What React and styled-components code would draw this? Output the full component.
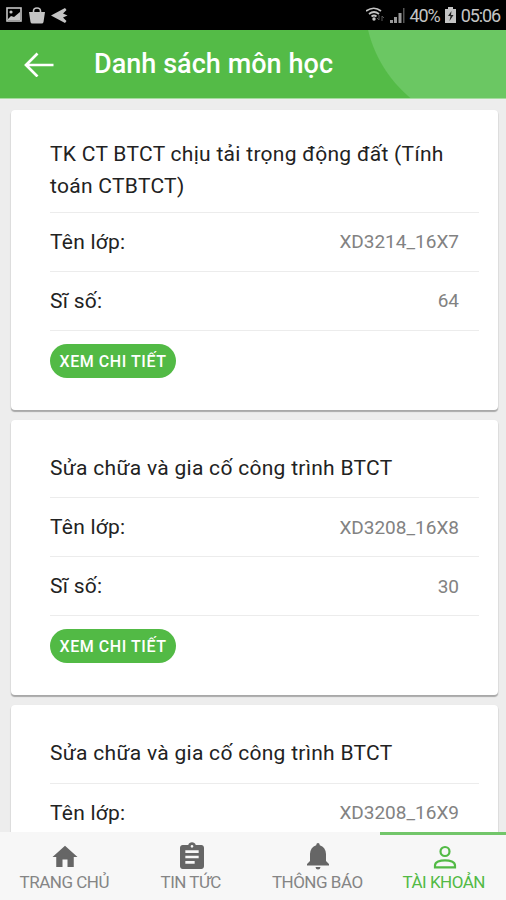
import styled, {createGlobalStyle} from "styled-components";
import {MdAssignment, MdHome} from "react-icons/md";

const GlobalStyle = createGlobalStyle`
  * {
    box-sizing: border-box;
  }

  body {
    margin: 0;
    font-family: Roboto, "Liberation Sans", sans-serif;
  }
`;

const Container = styled.div`
  height: 900px;
  width: 506px;
  display: flex;
  flex-direction: column;
  overflow: hidden;
  background-color: #ededed;
`;

const StatusBar = styled.div`
  height: 30px;
  flex: none;
  padding: 0 6px;
  display: flex;
  align-items: center;
  justify-content: space-between;
  background-color: #000;
  color: #c4c4c4;
`;

const StatusGroup = styled.div`
  display: flex;
  align-items: center;
  gap: ${props => props.$gap}px;
`;

const StatusText = styled.span`
  font-size: 18px;
  line-height: 30px;
  letter-spacing: -1.1px;
  padding-top: 2px;
`;

const Header = styled.header`
  height: 69px;
  flex: none;
  padding-left: 24px;
  display: flex;
  align-items: center;
  gap: 40px;
  background: radial-gradient(circle at 492px -30px, #6bc763 127px, #54bb47 128px);
  border-bottom: 1px solid #a5dc9f;
`;

const Title = styled.h1`
  margin: 0;
  color: white;
  font-size: 27px;
  font-weight: 500;
  letter-spacing: 0.05px;
`;

const List = styled.main`
  flex: 1;
  min-height: 0;
  overflow: hidden;
  padding: 10.5px 8px 0 11px;
`;

const Card = styled.section`
  margin-bottom: 10px;
  padding: 20px 19px 32px 39px;
  background-color: white;
  border-radius: 4px;
  box-shadow: 0 1px 1px 1px rgba(0, 0, 0, 0.05), 0 2px 1px rgba(0, 0, 0, 0.25);
`;

const Row = styled.div`
  min-height: 59px;
  padding: 9px 20px 9px 0;
  display: flex;
  align-items: center;
  justify-content: space-between;
  border-bottom: 1px solid #ececec;
`;

const NameRow = styled(Row)`
  min-height: 58.5px;
  padding-top: 8.5px;
  padding-bottom: 9.5px;
`;

const Name = styled.h2`
  margin: 0;
  color: #222;
  font-size: 21px;
  font-weight: 400;
  line-height: 32px;
  letter-spacing: 0.29px;
`;

const Label = styled.span`
  color: #222;
  font-size: 21px;
  letter-spacing: 0.25px;
`;

const Value = styled.span`
  color: #828282;
  font-size: 19px;
`;

const Button = styled.button`
  width: 126px;
  height: 34px;
  margin-top: 13px;
  padding: 1px 0 0;
  display: block;
  border: none;
  border-radius: 17px;
  background-color: #52ba45;
  color: white;
  font-family: inherit;
  font-size: 16px;
  font-weight: 500;
  letter-spacing: 0.55px;
  white-space: nowrap;
`;

const TabBar = styled.nav`
  height: 68px;
  flex: none;
  display: flex;
  background-color: #f7f7f7;
`;

const Tab = styled.a`
  flex: 1;
  padding: 5px 0 0 4px;
  display: flex;
  flex-direction: column;
  align-items: center;
  border-top: 3px solid ${props => props.$active ? "#72c66a" : "transparent"};
  color: ${props => props.$active ? "#52ba45" : "#666"};
`;

const TabIcon = styled.span`
  height: 33px;
  display: flex;
  align-items: center;
`;

const TabLabel = styled.span`
  margin: -1px 0 0 -2px;
  font-size: 17px;
  line-height: 20px;
  letter-spacing: -0.5px;
  white-space: nowrap;
  color: ${props => props.$active ? "#52ba45" : "#858585"};
`;

const PictureIcon = () => (
    <svg width="17" height="16" viewBox="0 0 17 16">
        <rect x="1" y="1" width="14" height="13" fill="none" stroke="currentColor" strokeWidth="1.6"/>
        <circle cx="5" cy="5" r="1.6" fill="currentColor"/>
        <path d="M2 12l3-3 3 1 6-5v8H2z" fill="currentColor"/>
    </svg>
);

const BagIcon = () => (
    <svg width="16" height="17" viewBox="0 0 16 17">
        <path d="M0 5h16l-1.500 10q-.2 1.500-2 1.500h-9q-1.800 0-2-1.500z" fill="currentColor"/>
        <path d="M4.500 7V4a3.500 3 0 0 1 7 0v3" fill="none" stroke="currentColor" strokeWidth="1.6"/>
    </svg>
);

const PlaneIcon = () => (
    <svg width="18" height="15" viewBox="0 0 18 15">
        <path d="M0 7.500L14 0l1.500 2-3.500 3.500 4.500 2-4.500 2 3.500 3.500-1.500 2z" fill="currentColor"/>
    </svg>
);

const WifiIcon = () => (
    <svg width="19" height="16" viewBox="0 0 19 16">
        <g fill="none" stroke="currentColor" strokeWidth="1.7">
            <path d="M0 4q8-5.500 15 0"/>
            <path d="M3 7q5-4 10 0"/>
            <path d="M5.500 9.500q2.500-2 5 0"/>
        </g>
        <circle cx="8" cy="12" r="1.700" fill="currentColor"/>
        <path d="M13 8v5l-2-2m5 3V9l2 2" fill="none" stroke="#555" strokeWidth="1"/>
    </svg>
);

const SignalIcon = () => (
    <svg width="15" height="15" viewBox="0 0 15 15">
        <path d="M0 12h3v3H0zM4 9h3v6H4zM8.500 5h3v10h-3z" fill="#999"/>
        <path d="M13 0h1.500v15H13z" fill="#555"/>
    </svg>
);

const BatteryIcon = () => (
    <svg width="11" height="16" viewBox="0 0 11 16">
        <path d="M3 0h5v2h3v14H0V2h3z" fill="currentColor"/>
        <path d="M6.500 4L3 9h2.500L4.500 14 8.500 8H6z" fill="#222"/>
    </svg>
);

const BackIcon = () => (
    <svg width="30" height="26" viewBox="0 0 30 26">
        <path d="M29.500 14H2M13.500 2.500L2 14l11.500 11.500" fill="none" stroke="white" strokeWidth="2.700"/>
    </svg>
);

const BellIcon = () => (
    <svg width="22" height="27" viewBox="0 0 22 27" fill="currentColor">
        <path d="M11 0q1.600 0 1.800 2.300Q18.500 4 19 11v7l3 3v1.500H0V21l3-3v-7q.5-7 6.200-8.700Q9.400 0 11 0z"/>
        <path d="M8.500 24h5q-.3 2.500-2.500 2.500T8.500 24z"/>
    </svg>
);

const PersonIcon = () => (
    <svg width="24" height="24" viewBox="0 0 24 24" fill="none" stroke="currentColor" strokeWidth="2.2">
        <circle cx="12" cy="6.500" r="4.500"/>
        <path d="M2 22.300V20.500C2 17 7 15.300 12 15.300S22 17 22 20.500v1.800z"/>
    </svg>
);

const courses = [
    {name: "TK CT BTCT chịu tải trọng động đất (Tính toán CTBTCT)", className: "XD3214_16X7", size: 64},
    {name: "Sửa chữa và gia cố công trình BTCT", className: "XD3208_16X8", size: 30},
    {name: "Sửa chữa và gia cố công trình BTCT", className: "XD3208_16X9"},
];

const tabs = [
    {label: "TRANG CHỦ", Icon: MdHome, size: 30},
    {label: "TIN TỨC", Icon: MdAssignment, size: 32},
    {label: "THÔNG BÁO", Icon: BellIcon},
    {label: "TÀI KHOẢN", Icon: PersonIcon, active: true},
];

const Course = ({course}) => (
    <Card>
        <NameRow>
            <Name>{course.name}</Name>
        </NameRow>
        <Row>
            <Label>Tên lớp:</Label>
            <Value>{course.className}</Value>
        </Row>
        {course.size && (
            <>
                <Row>
                    <Label>Sĩ số:</Label>
                    <Value>{course.size}</Value>
                </Row>
                <Button>XEM CHI TIẾT</Button>
            </>
        )}
    </Card>
);

const App = () => {
    return (
        <Container>
            <GlobalStyle/>
            <StatusBar>
                <StatusGroup $gap={6}>
                    <PictureIcon/>
                    <BagIcon/>
                    <PlaneIcon/>
                </StatusGroup>
                <StatusGroup $gap={5}>
                    <WifiIcon/>
                    <SignalIcon/>
                    <StatusText>40%</StatusText>
                    <BatteryIcon/>
                    <StatusText>05:06</StatusText>
                </StatusGroup>
            </StatusBar>
            <Header>
                <BackIcon/>
                <Title>Danh sách môn học</Title>
            </Header>
            <List>
                {courses.map((course) => (
                    <Course course={course} key={course.className}/>
                ))}
            </List>
            <TabBar>
                {tabs.map(({label, Icon, size, active}) => (
                    <Tab $active={active} key={label}>
                        <TabIcon>
                            <Icon size={size}/>
                        </TabIcon>
                        <TabLabel $active={active}>{label}</TabLabel>
                    </Tab>
                ))}
            </TabBar>
        </Container>
    );
};

export default App;
